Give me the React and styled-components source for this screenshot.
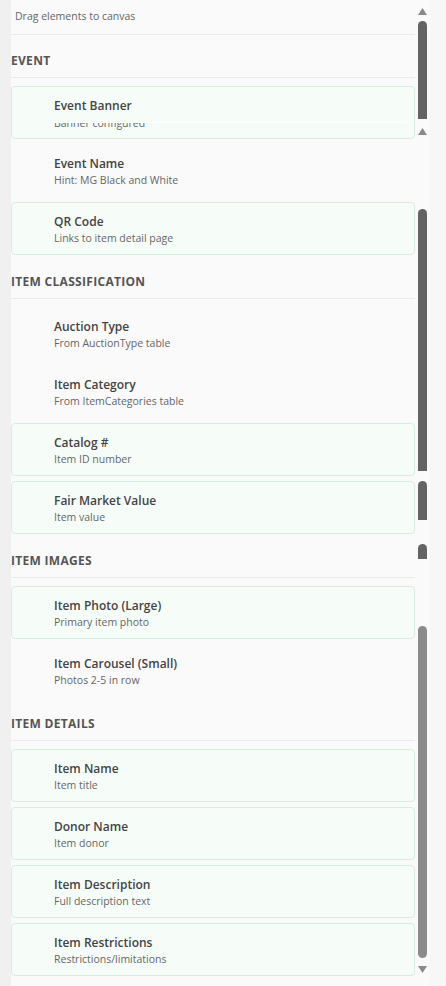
import React from 'react';
import styled, { createGlobalStyle } from 'styled-components';

const GlobalStyle = createGlobalStyle`
  body {
    margin: 0;
    background: #f2f2f2;
    font-family: "Open Sans", "Liberation Sans", sans-serif;
  }
`;

const sections = [
  {
    title: 'Event',
    items: [
      { name: 'Event Banner', hint: 'Banner configured', on: true, seam: true },
      { name: 'Event Name', hint: 'Hint: MG Black and White' },
      { name: 'QR Code', hint: 'Links to item detail page', on: true },
    ],
  },
  {
    title: 'Item Classification',
    items: [
      { name: 'Auction Type', hint: 'From AuctionType table' },
      { name: 'Item Category', hint: 'From ItemCategories table' },
      { name: 'Catalog #', hint: 'Item ID number', on: true },
      { name: 'Fair Market Value', hint: 'Item value', on: true },
    ],
  },
  {
    title: 'Item Images',
    items: [
      { name: 'Item Photo (Large)', hint: 'Primary item photo', on: true },
      { name: 'Item Carousel (Small)', hint: 'Photos 2-5 in row' },
    ],
  },
  {
    title: 'Item Details',
    items: [
      { name: 'Item Name', hint: 'Item title', on: true },
      { name: 'Donor Name', hint: 'Item donor', on: true },
      { name: 'Item Description', hint: 'Full description text', on: true },
      { name: 'Item Restrictions', hint: 'Restrictions/limitations', on: true },
    ],
  },
];

// pieces of the scrollbar as seen in the capture (top to bottom)
const scrollBits = [
  { kind: 'gap', h: 8 },
  { kind: 'up' },
  { kind: 'gap', h: 6 },
  { kind: 'thumb', h: 98 },
  { kind: 'gap', h: 9 },
  { kind: 'up' },
  { kind: 'gap', h: 74 },
  { kind: 'thumb', h: 262 },
  { kind: 'gap', h: 10 },
  { kind: 'thumb', h: 39 },
  { kind: 'gap', h: 24 },
  { kind: 'thumb', h: 15 },
  { kind: 'gap', h: 67 },
  { kind: 'thumb', h: 332, light: true, round: true },
  { kind: 'gap', h: 8 },
  { kind: 'down' },
];

function Arrow({ down }) {
  return (
    <svg width="9" height="7" viewBox="0 0 9 7">
      <polygon points={down ? '0,0 9,0 4.5,7' : '4.5,0 9,7 0,7'} fill="#8a8a8a" />
    </svg>
  );
}

function Card({ item }) {
  return (
    <CardBox on={item.on}>
      <CardTitle>{item.name}</CardTitle>
      {item.seam ? (
        <SeamClip>
          <SeamWindow>
            <CardHint>{item.hint}</CardHint>
          </SeamWindow>
        </SeamClip>
      ) : (
        <CardHint>{item.hint}</CardHint>
      )}
    </CardBox>
  );
}

export default function App() {
  return (
    <Page>
      <GlobalStyle />
      <Gutter />
      <Panel>
        <Header>Drag elements to canvas</Header>
        {sections.map((s, i) => (
          <Section key={s.title}>
            <SectionTitle first={i === 0}>{s.title}</SectionTitle>
            <CardList>
              {s.items.map((it) => (
                <Card key={it.name} item={it} />
              ))}
            </CardList>
          </Section>
        ))}
      </Panel>
      <Track>
        {scrollBits.map((b, i) => {
          if (b.kind === 'gap') return <TrackGap key={i} h={b.h} />;
          if (b.kind === 'up') return <Arrow key={i} />;
          if (b.kind === 'down') return <Arrow key={i} down />;
          return <Thumb key={i} h={b.h} light={b.light} round={b.round} />;
        })}
      </Track>
      <RightEdge />
    </Page>
  );
}

const Page = styled.div`
  display: flex;
  height: 986px;
  overflow: hidden;
`;

const Gutter = styled.div`
  width: 11px;
  flex-shrink: 0;
  background: #f0f0f0;
`;

const Panel = styled.div`
  width: 404px;
  flex-shrink: 0;
  background: #fafafa;
  display: flex;
  flex-direction: column;
`;

const Header = styled.div`
  height: 35px;
  box-sizing: border-box;
  padding: 8px 4px 0;
  font-size: 10.5px;
  line-height: 16px;
  color: #666;
  border-bottom: 1px solid #ebebeb;
`;

const Section = styled.div`
  display: flex;
  flex-direction: column;
`;

const SectionTitle = styled.div`
  padding: ${(p) => (p.first ? '18px' : '14px')} 0 8px;
  margin-top: ${(p) => (p.first ? '0' : '5px')};
  margin-bottom: 8px;
  font-size: 12px;
  line-height: 16px;
  font-weight: 700;
  letter-spacing: 0.3px;
  text-transform: uppercase;
  color: #555;
  border-bottom: 1px solid #ebebeb;
`;

const CardList = styled.div`
  display: flex;
  flex-direction: column;
  gap: 5px;
`;

const CardBox = styled.div`
  height: 53px;
  box-sizing: border-box;
  padding: 10px 8px 0 42px;
  border: 1px solid ${(p) => (p.on ? '#d5eedf' : 'transparent')};
  border-radius: 4px;
  background: ${(p) => (p.on ? '#f6fdf8' : 'transparent')};
  display: flex;
  flex-direction: column;
`;

const CardTitle = styled.div`
  font-size: 12px;
  line-height: 18px;
  font-weight: 600;
  color: #444;
`;

const CardHint = styled.div`
  font-size: 10.5px;
  line-height: 15px;
  color: #666;
`;

/* the capture was stitched here: the hint's upper half is lost */
const SeamClip = styled.div`
  height: 15px;
  padding-top: 7px;
  box-sizing: border-box;
`;

const SeamWindow = styled.div`
  height: 8px;
  overflow: hidden;
  border-top: 1px solid #fff;

  & > div {
    margin-top: -7px;
  }
`;

const Track = styled.div`
  width: 15px;
  flex-shrink: 0;
  background: #fafafa;
  display: flex;
  flex-direction: column;
  align-items: center;
`;

const TrackGap = styled.div`
  height: ${(p) => p.h}px;
  flex-shrink: 0;
`;

const Thumb = styled.div`
  width: 9px;
  height: ${(p) => p.h}px;
  flex-shrink: 0;
  background: ${(p) => (p.light ? '#8b8b8b' : '#646464')};
  border-radius: ${(p) => (p.round ? '4.5px' : '4.5px 4.5px 0 0')};
`;

const RightEdge = styled.div`
  flex: 1;
  background: #f7f7f7;
`;
